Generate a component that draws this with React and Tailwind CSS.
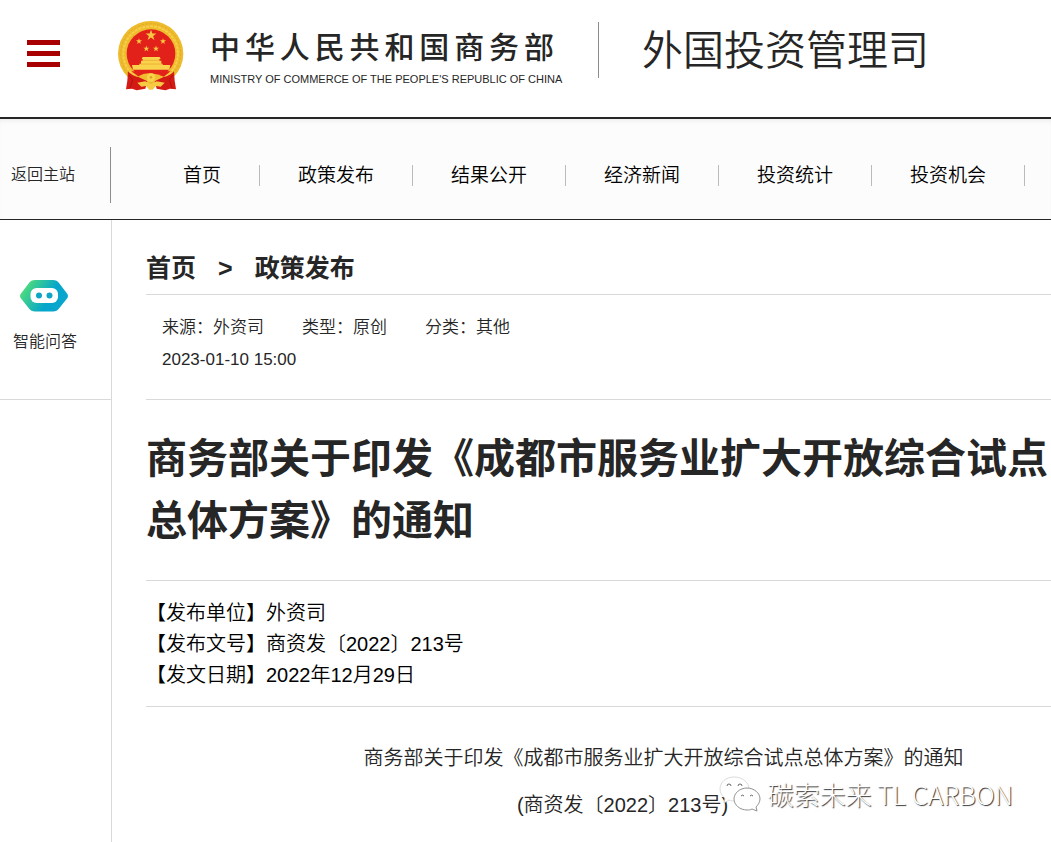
const navItems = ["首页", "政策发布", "结果公开", "经济新闻", "投资统计", "投资机会"];

const meta = [
  { label: "来源", value: "外资司" },
  { label: "类型", value: "原创" },
  { label: "分类", value: "其他" },
];

const docInfo = [
  { label: "【发布单位】", value: "外资司" },
  { label: "【发布文号】", value: "商资发〔2022〕213号" },
  { label: "【发文日期】", value: "2022年12月29日" },
];

const STAR = "M0-10 2.4-3.2 9.5-3.1 3.8 1.2 5.9 8.1 0 4-5.9 8.1-3.8 1.2-9.5-3.1-2.4-3.2Z";

function Emblem() {
  return (
    <svg className="h-[70px] w-[66px] shrink-0" viewBox="24 33 198 210" aria-hidden="true">
      {/* wheat ring */}
      <circle cx="122" cy="131" r="98" fill="#eebb2c" />
      <circle cx="122" cy="131" r="90" fill="none" stroke="#e3ac28" strokeWidth="3" strokeDasharray="7 5" />
      <circle cx="122" cy="131" r="82" fill="none" stroke="#f7cf4c" strokeWidth="6" strokeDasharray="9 3" />
      <circle cx="123" cy="131" r="73" fill="#e3211b" />
      {/* stars */}
      <g fill="#f6c944">
        <path d={STAR} transform="translate(123 76) scale(1.7)" />
        <path d={STAR} transform="translate(87 94) scale(.95)" />
        <path d={STAR} transform="translate(159 94) scale(.95)" />
        <path d={STAR} transform="translate(109 116) scale(.95)" />
        <path d={STAR} transform="translate(138 116) scale(.95)" />
      </g>
      {/* gate */}
      <path
        d="M98 141H149L152 147H148V152H154V161H158V165H181L178 179H69L66 165H88V161H93V152H98V147H95Z"
        fill="#f9d34b"
      />
      <path d="M99 151H148M92 162H156" stroke="#eda32c" strokeWidth="2" />
      {/* drapery over the lower ring */}
      <path d="M54 184Q64 198 90 202L112 214 106 236 80 241 66 236 48 238 52 212Z" fill="#d41a15" />
      <path d="M192 184Q182 198 156 202L134 214 140 236 166 241 180 236 198 238 194 212Z" fill="#d41a15" />
      <path d="M64 184H182L160 201H88Z" fill="#e3211b" />
      <path d="M84 200Q102 188 123 190T162 200L146 208H100Z" fill="#f0bd2e" />
      <circle cx="123" cy="202" r="12" fill="#f9d34b" />
      <circle cx="123" cy="202" r="4" fill="#e0a02a" />
      <path d="M82 218 106 214 123 222 140 214 164 218 152 230 138 228 128 239H118L108 228 94 230Z" fill="#f6ca42" />
      <path d="M58 196 68 210 60 234M188 196 178 210 186 234" stroke="#b3120e" strokeWidth="3" fill="none" />
    </svg>
  );
}

function BotIcon() {
  return (
    <svg className="h-8 w-12" viewBox="0 0 48 32" aria-hidden="true">
      <defs>
        <linearGradient id="bot" x1="0" y1="0.3" x2="1" y2="0.7">
          <stop offset="0.05" stopColor="#4ddb7c" />
          <stop offset="0.62" stopColor="#06a6cb" />
          <stop offset="1" stopColor="#0aa5cf" />
        </linearGradient>
      </defs>
      <path
        d="M15 0H33Q37 0 39 3L47 13.500Q49 16 47 18.500L39 28.500Q37 31.500 33 31.500H15Q11 31.500 9 28.500L1 18.500Q-1 16 1 13.500L9 3Q11 0 15 0Z"
        fill="url(#bot)"
      />
      <rect x="10.500" y="8" width="27.500" height="15" rx="6" fill="#fff" />
      <circle cx="19" cy="15.500" r="3" fill="#0fa5c6" />
      <circle cx="29.500" cy="15.500" r="3" fill="#0fa5c6" />
    </svg>
  );
}

function WechatIcon() {
  return (
    <svg className="h-9 w-[42px]" viewBox="0 0 42 36" fill="#fff" aria-hidden="true">
      <path
        d="M15 1C7 1 1 6 1 13c0 4 2 7 5 9l-1 5 5-3c2 1 4 1 6 1C25 25 30 20 30 13S23 1 15 1Z"
        stroke="#ccc"
        strokeWidth="0.7"
      />
      <path
        d="M28 12c-7 0-13 5-13 11s6 11 13 11c2 0 3 0 5-1l5 2-1-4c2-2 4-5 4-8 0-6-6-11-13-11Z"
        stroke="#777"
        strokeWidth="0.8"
      />
      <path
        d="M8 10a2 2 0 0 1 4 0M19 10a2 2 0 0 1 4 0M22 20a2 2 0 0 1 3 0M31 20a2 2 0 0 1 3 0"
        fill="none"
        stroke="#666"
      />
    </svg>
  );
}

function Header() {
  return (
    <header className="flex h-[119px] items-start border-b-2 border-[#262626] pl-[27px]">
      <button type="button" aria-label="菜单" className="mt-10 flex w-[33px] shrink-0 flex-col gap-[6px]">
        <span className="h-[5px] w-full bg-[#a80000]" />
        <span className="h-[5px] w-full bg-[#a80000]" />
        <span className="h-[5px] w-full bg-[#a80000]" />
      </button>
      <a href="#" className="mt-[21px] ml-[58px] flex shrink-0 gap-[26px]">
        <Emblem />
        <span className="block w-[344px] pt-1">
          <span className="block text-[30px] leading-[46px] font-medium [text-align-last:justify]">
            中华人民共和国商务部
          </span>
          <span className="block text-[11px] leading-4 whitespace-nowrap">
            MINISTRY OF COMMERCE OF THE PEOPLE'S REPUBLIC OF CHINA
          </span>
        </span>
      </a>
      <div className="mt-[22px] ml-11 h-14 shrink-0 border-l border-[#8c8c8c] pl-[43px]">
        <h2 className="text-[41px] leading-[58px] font-[350] whitespace-nowrap">外国投资管理司</h2>
      </div>
    </header>
  );
}

function Nav() {
  return (
    <nav className="flex h-[101px] items-center overflow-hidden border-b border-[#262626] bg-[#fcfcfc] shadow-[inset_0_4px_4px_-2px_#eeeeee]">
      <a
        href="#"
        className="mt-3 flex h-14 w-[111px] shrink-0 items-center border-r border-[#8c8c8c] pl-[11px] text-base font-[350]"
      >
        返回主站
      </a>
      <ul className="mt-3 ml-[34px] flex shrink-0 text-[19px] leading-[21px] font-[350] text-black">
        {navItems.map((item) => (
          <li key={item} className="border-r border-[#bbbbbb] px-[38px]">
            <a href="#">{item}</a>
          </li>
        ))}
      </ul>
    </nav>
  );
}

export default function App() {
  return (
    <div className="relative flex min-h-screen flex-col overflow-x-hidden bg-white font-['Liberation_Sans','Noto_Sans_CJK_SC',sans-serif] text-[#262626]">
      <Header />
      <Nav />

      <div className="flex flex-1">
        {/* Sidebar */}
        <aside className="w-28 shrink-0 border-r border-[#d9d9d9]">
          <a href="#" className="flex h-[180px] flex-col border-b border-[#d9d9d9] pt-[60px] pl-[13px] font-[350]">
            <span className="flex pl-[7px]">
              <BotIcon />
            </span>
            <span className="mt-[18px] text-base leading-6">智能问答</span>
          </a>
        </aside>

        <main className="min-w-0 flex-1 pl-[34px]">
          <div className="flex gap-[22px] border-b border-[#d9d9d9] pt-[30px] pb-2 text-[25px] leading-9 font-bold">
            <a href="#">首页</a>
            <span>&gt;</span>
            <a href="#">政策发布</a>
          </div>

          <div className="border-b border-[#d9d9d9] pt-[17px] pb-[23px] pl-4 text-[17px] leading-8 font-[350]">
            <div className="flex gap-[38px]">
              {meta.map((m) => (
                <span key={m.label}>
                  {m.label}：{m.value}
                </span>
              ))}
            </div>
            <time className="block">2023-01-10 15:00</time>
          </div>

          <h1 className="border-b border-[#d9d9d9] pt-7 pb-7 text-[41px] leading-[62px] font-bold">
            商务部关于印发《成都市服务业扩大开放综合试点总体方案》的通知
          </h1>

          <div className="border-b border-[#d9d9d9] pt-[17px] pb-[15px] text-xl leading-[31px] font-[350] text-black">
            {docInfo.map((row) => (
              <p key={row.label}>
                {row.label}
                {row.value}
              </p>
            ))}
          </div>

          <div className="pt-7 text-center text-xl leading-[47px] font-[350]">
            <p className="pl-[130px]">商务部关于印发《成都市服务业扩大开放综合试点总体方案》的通知</p>
            <p className="pl-12">(商资发〔2022〕213号)</p>
          </div>
        </main>
      </div>

      {/* Account watermark */}
      <div className="absolute right-[38px] bottom-[30px] flex items-center gap-[6px]">
        <WechatIcon />
        <span className="font-['Noto_Sans_CJK_SC',sans-serif] text-[26px] leading-9 font-light whitespace-nowrap text-white [text-shadow:1px_1px_1px_#333333]">
          碳索未来 TL CARBON
        </span>
      </div>
    </div>
  );
}
